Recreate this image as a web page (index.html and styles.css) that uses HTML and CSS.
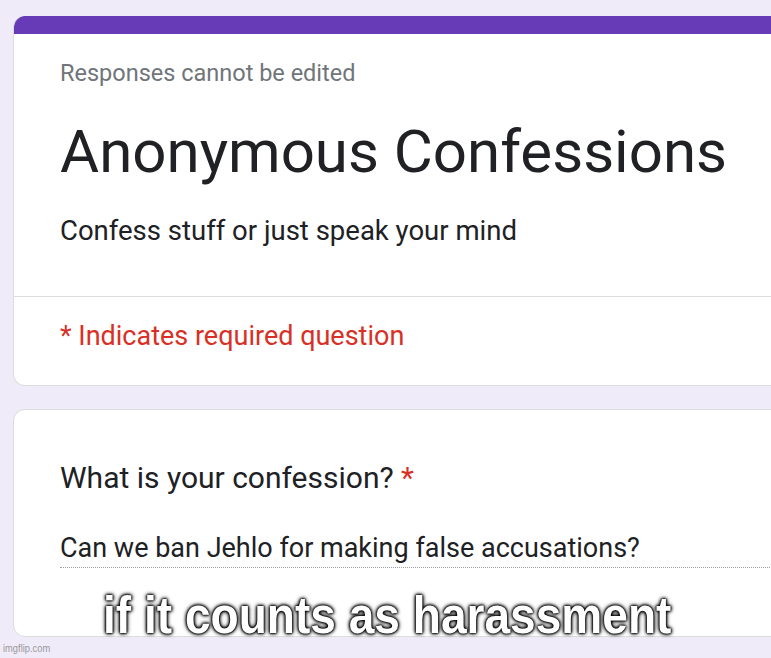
FILE: index.html
```html
<!DOCTYPE html>
<html>
<head>
<meta charset="utf-8">
<link rel="stylesheet" href="styles.css">
</head>
<body>
<div class="page">
  <div class="card head-card">
    <div class="accent"></div>
    <div class="head-body">
      <div class="note">Responses cannot be edited</div>
      <div class="title">Anonymous Confessions</div>
      <div class="desc">Confess stuff or just speak your mind</div>
    </div>
    <div class="req-row">
      <div class="req">* Indicates required question</div>
    </div>
  </div>
  <div class="card q-card">
    <div class="question">What is your confession? <span class="star">*</span></div>
    <div class="answer">Can we ban Jehlo for making false accusations?</div>
  </div>
</div>
<div class="meme-caption">if it counts as harassment</div>
<div class="watermark">imgflip.com</div>
</body>
</html>
```
FILE: styles.css
```css
html, body {
  margin: 0;
  padding: 0;
}
body {
  width: 771px;
  height: 658px;
  overflow: hidden;
  position: relative;
  background: #f0ebf8;
  font-family: Roboto, "Noto Sans", Arial, sans-serif;
  color: #202124;
}
.page {
  padding: 16px 0 0 13px;
  display: flex;
  flex-direction: column;
  gap: 23px;
}
.card {
  width: 820px;
  background: #fff;
  border: 1px solid #dadce0;
  border-radius: 12px;
  overflow: hidden;
  box-sizing: border-box;
  white-space: nowrap;
}
.head-card {
  height: 370px;
  border-top: none;
}
.accent {
  height: 18px;
  background: #673ab7;
}
.head-body {
  height: 263px;
  padding: 24px 0 0 46px;
  border-bottom: 1px solid #dadce0;
  box-sizing: border-box;
}
.note {
  font-size: 23.5px;
  line-height: 30px;
  color: #70757a;
}
.title {
  margin-top: 28px;
  font-size: 60px;
  line-height: 72px;
}
.desc {
  margin-top: 26px;
  font-size: 27.5px;
  line-height: 34px;
}
.req-row {
  padding: 22px 0 0 46px;
}
.req {
  font-size: 27px;
  line-height: 34px;
  color: #d93025;
}
.q-card {
  height: 228px;
  padding: 49px 0 0 46px;
}
.question {
  font-size: 30px;
  line-height: 38px;
}
.star {
  color: #d93025;
}
.answer {
  margin-top: 34px;
  font-size: 27px;
  line-height: 34px;
  padding-bottom: 2px;
  border-bottom: 1px dotted #9aa0a6;
}
.meme-caption {
  position: absolute;
  left: 103px;
  top: 587px;
  font-family: "Liberation Sans", Arial, sans-serif;
  font-weight: bold;
  font-size: 52px;
  line-height: 56px;
  color: #fff;
  white-space: nowrap;
  transform-origin: left center;
  transform: scaleX(0.886);
  text-shadow: 0 0 2px #000, 0 0 3px #000, 0 0 4px #000, 0 0 6px #000;
}
.watermark {
  position: absolute;
  left: 3px;
  top: 642px;
  font-family: "Liberation Sans", Arial, sans-serif;
  font-size: 11px;
  line-height: 13px;
  color: #9a9a9a;
  transform-origin: left center;
  transform: scaleX(0.85);
}
```
